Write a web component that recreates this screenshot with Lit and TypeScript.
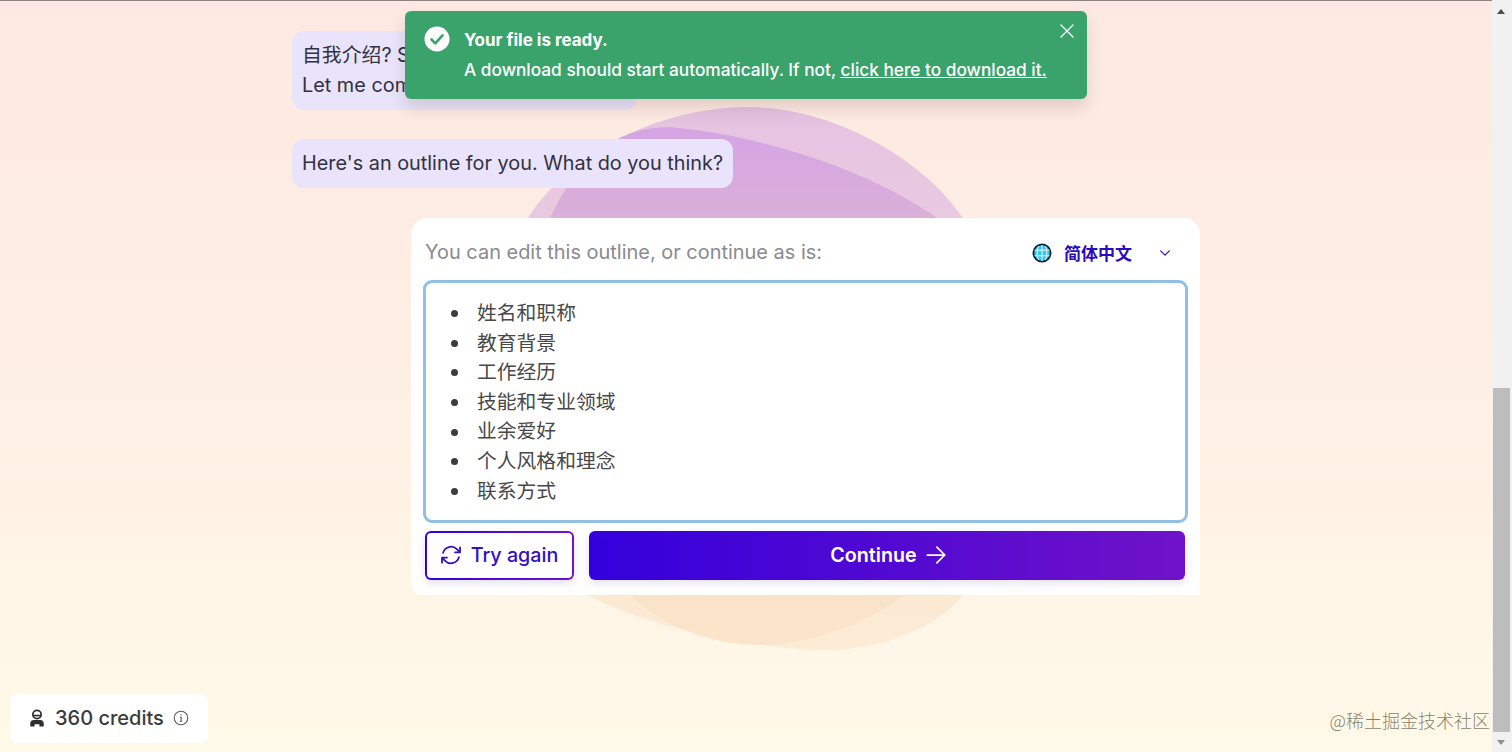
import { LitElement, css, html, svg } from 'lit'
import { customElement } from 'lit/decorators.js'

const outline = ['姓名和职称', '教育背景', '工作经历', '技能和专业领域', '业余爱好', '个人风格和理念', '联系方式']

const heroIcon = (d: string, width = 1.5) => html`
  <svg viewBox="0 0 24 24" fill="none" stroke="currentColor" stroke-width=${width} stroke-linecap="round" stroke-linejoin="round">
    <path d=${d}></path>
  </svg>
`

@customElement('app-root')
export class AppRoot extends LitElement {
  static styles = css`
    :host {
      display: flex;
      height: 100vh;
      overflow: hidden;
      font-family: Inter, 'Noto Sans CJK SC', sans-serif;
      color: #33313f;
    }
    .page {
      position: relative;
      flex: 1;
      min-width: 0;
      border-top: 1px solid #8f8280;
      background: linear-gradient(180deg, #fde9e2 0%, #feefe4 50%, #fff9e8 100%);
    }
    .blobs {
      position: absolute;
      inset: -1px 0 0 0;
      width: 100%;
      height: 752px;
    }
    .column {
      position: relative;
      display: flex;
      flex-direction: column;
      align-items: flex-start;
      padding: 30px 0 0 292px;
    }
    .bubble {
      box-sizing: border-box;
      height: 49px;
      padding: 10px;
      border-radius: 12px;
      background: #e9e4fb;
      font-size: 19.85px;
      line-height: 29.5px;
    }
    .bubble.intro {
      width: 345px;
      height: 79px;
      margin-bottom: 29px;
    }
    .panel {
      box-sizing: border-box;
      width: 789px;
      margin: 30px 0 0 119px;
      padding: 0 12px 15px;
      border-radius: 16px 16px 0 12px;
      background: #fff;
    }
    .panel-head {
      display: flex;
      align-items: center;
      justify-content: space-between;
      box-sizing: border-box;
      height: 62px;
      padding: 6px 0 0 2px;
      color: #8a8a8f;
      font-size: 19.95px;
    }
    .lang {
      display: flex;
      align-items: center;
      padding-top: 1px;
      color: #2a0cbc;
      font-size: 17px;
      font-weight: 700;
    }
    .lang svg.globe {
      width: 20px;
      height: 20px;
      margin-right: 12px;
    }
    .lang .chev {
      display: flex;
      width: 14px;
      height: 14px;
      margin: 0 16px 0 26px;
    }
    .editor {
      box-sizing: border-box;
      height: 243px;
      margin: 0;
      padding: 16px 0 0 25px;
      border: 3px solid #90bfe8;
      border-radius: 9px;
      list-style: none;
      color: #484848;
      font-size: 19.8px;
      line-height: 29.6px;
    }
    .editor li {
      display: flex;
      align-items: center;
      gap: 19px;
    }
    .editor li::before {
      content: '';
      flex: none;
      width: 7px;
      height: 7px;
      border-radius: 50%;
      background: #3c3c40;
    }
    .actions {
      display: flex;
      gap: 15px;
      margin: 8px 3px 0 2px;
    }
    .btn {
      display: flex;
      align-items: center;
      justify-content: center;
      box-sizing: border-box;
      height: 49px;
      padding-bottom: 2px;
      border-radius: 6px;
      font-size: 19.7px;
      box-shadow: 0 3px 8px rgba(60, 40, 120, 0.14);
    }
    .btn svg {
      width: 24px;
      height: 24px;
    }
    .retry {
      gap: 8px;
      width: 149px;
      border: 2px solid transparent;
      background: linear-gradient(#fff, #fff) padding-box, linear-gradient(90deg, #3300d9, #7413cc) border-box;
      color: #3210c6;
      font-weight: 500;
    }
    .retry svg {
      margin-left: -2px;
    }
    .continue {
      flex: 1;
      gap: 5px;
      padding-left: 6px;
      background: linear-gradient(90deg, #3300dc, #7012c8);
      color: #fff;
      font-weight: 600;
    }
    .continue svg {
      width: 28px;
      height: 28px;
    }
    .toast {
      position: absolute;
      top: 10px;
      left: 405px;
      display: flex;
      box-sizing: border-box;
      width: 682px;
      height: 88px;
      padding: 15px 0 0 19px;
      border-radius: 6px;
      background: #3aa36c;
      color: #fff;
      font-size: 17.28px;
      box-shadow: 0 10px 16px rgba(90, 60, 60, 0.16);
    }
    .toast .check {
      flex: none;
      width: 26px;
      height: 26px;
      margin-right: 14px;
    }
    .toast .title {
      font-size: 17px;
      font-weight: 700;
      line-height: 29px;
    }
    .toast .desc {
      font-weight: 500;
      line-height: 30px;
    }
    .toast a {
      color: inherit;
      text-decoration: underline;
    }
    .toast .close {
      position: absolute;
      top: 11px;
      right: 11px;
      display: flex;
      width: 18px;
      height: 18px;
    }
    .credits {
      position: absolute;
      left: 10px;
      bottom: 9px;
      display: flex;
      align-items: center;
      box-sizing: border-box;
      width: 198px;
      height: 49px;
      padding: 0 0 2px 18px;
      border-radius: 8px;
      background: #fff;
      font-size: 20px;
      font-weight: 500;
      color: #3a3a3d;
    }
    .credits .badge {
      width: 18px;
      height: 18px;
      margin-right: 9px;
    }
    .credits .info {
      display: flex;
      width: 16px;
      height: 16px;
      margin-left: 9px;
      color: #5c5c60;
    }
    .watermark {
      position: absolute;
      right: 2px;
      bottom: 20px;
      color: rgba(110, 105, 90, 0.85);
      font-size: 18px;
      font-weight: 300;
      line-height: 24px;
      font-family: 'Noto Sans CJK SC', sans-serif;
    }
    .scrollbar {
      flex: none;
      display: flex;
      flex-direction: column;
      align-items: center;
      box-sizing: border-box;
      width: 20px;
      padding-right: 2px;
      background: #f1f1f1;
    }
    .thumb {
      width: 17px;
      height: 344px;
      margin-top: auto;
      background: #bdbdbd;
    }
    .arrow {
      width: 0;
      height: 0;
      margin: 8px 0 7px;
      border-left: 4.5px solid transparent;
      border-right: 4.5px solid transparent;
      border-top: 5px solid #8e8e8e;
    }
    .arrow.up {
      margin: 9px 0 0;
      border-top: 0;
      border-bottom: 5px solid #4a4a4a;
    }
  `

  private blobs() {
    return svg`
      <defs>
        <linearGradient id="outer" x1="0" y1="0" x2="0" y2="1">
          <stop offset="0" stop-color="#e6c2e2"></stop>
          <stop offset="0.2" stop-color="#e9c9e0"></stop>
          <stop offset="0.9" stop-color="#fbe9d2"></stop>
          <stop offset="1" stop-color="#fcecd6"></stop>
        </linearGradient>
        <linearGradient id="inner" x1="0" y1="0" x2="0" y2="1">
          <stop offset="0" stop-color="#d4a4e4"></stop>
          <stop offset="0.18" stop-color="#dbb0d8"></stop>
          <stop offset="0.9" stop-color="#f9e3c8"></stop>
          <stop offset="1" stop-color="#fbe5ca"></stop>
        </linearGradient>
      </defs>
      <path fill="url(#outer)" d="M528 218C565 160 650 107 750 107C830 108 920 155 963 218L963 595C940 625 885 650 827 650C770 651 650 630 588 595Z"></path>
      <path fill="url(#inner)" d="M550 218C575 165 610 127 670 127C760 135 870 170 937 218L903 595C880 615 820 645 760 645C710 645 660 625 630 595Z"></path>
    `
  }

  render() {
    return html`
      <div class="page">
        <svg class="blobs" viewBox="0 0 1492 752">${this.blobs()}</svg>
        <div class="column">
          <div class="bubble intro">自我介绍? Sure thing!<br />Let me come up with an outline.</div>
          <div class="bubble">Here's an outline for you. What do you think?</div>
          <div class="panel">
            <div class="panel-head">
              <span>You can edit this outline, or continue as is:</span>
              <div class="lang">
                <svg class="globe" viewBox="0 0 20 20">
                  <circle cx="10" cy="10" r="8.6" fill="#35c4ea" stroke="#0a2230" stroke-width="1.8"></circle>
                  <path d="M2.5 7.2h15M2.5 12.8h15M10 2v16M6.5 3.2c-1.8 4-1.8 9.6 0 13.6M13.5 3.2c1.8 4 1.8 9.6 0 13.6" fill="none" stroke="#e6fbff" stroke-width="1"></path>
                </svg>
                简体中文
                <span class="chev">${heroIcon('M19.5 8.25l-7.5 7.5-7.5-7.5', 2)}</span>
              </div>
            </div>
            <ul class="editor">
              ${outline.map((item) => html`<li>${item}</li>`)}
            </ul>
            <div class="actions">
              <div class="btn retry">
                ${heroIcon('M16.023 9.348h4.992v-.001M2.985 19.644v-4.992m0 0h4.992m-4.993 0l3.181 3.183a8.25 8.25 0 0013.803-3.7M4.031 9.865a8.25 8.25 0 0113.803-3.7l3.181 3.182m0-4.991v4.99', 1.8)}
                Try again
              </div>
              <div class="btn continue">Continue ${heroIcon('M4.5 12h15m0 0l-6.75-6.75M19.5 12l-6.75 6.75')}</div>
            </div>
          </div>
        </div>
        <div class="toast">
          <svg class="check" viewBox="0 0 26 26">
            <circle cx="13" cy="13" r="12.5" fill="#fff"></circle>
            <path d="M7.5 13.5l3.8 3.8 7.2-8" fill="none" stroke="#3aa36c" stroke-width="2.6" stroke-linecap="round" stroke-linejoin="round"></path>
          </svg>
          <div>
            <div class="title">Your file is ready.</div>
            <div class="desc">A download should start automatically. If not, <a href="#">click here to download it.</a></div>
          </div>
          <span class="close">${heroIcon('M4 20L20 4M4 4l16 16', 1.8)}</span>
        </div>
        <div class="credits">
          <svg class="badge" viewBox="0 0 20 20">
            <circle cx="10" cy="6.2" r="4.6" fill="none" stroke="#2e2e30" stroke-width="1.9"></circle>
            <path d="M5.4 6.4h9.2v1.8H5.4z" fill="#2e2e30"></path>
            <path d="M2.5 19.5v-3.5c0-2.5 2-3.8 4-3.8h7c2 0 4 1.3 4 3.8v3.5h-4.8v-2.5h-5.400v2.5z" fill="#2e2e30"></path>
          </svg>
          360 credits
          <span class="info">
            <svg viewBox="0 0 16 16" fill="none" stroke="currentColor">
              <circle cx="8" cy="8" r="6.8" stroke-width="1.1"></circle>
              <path d="M6.8 7.3H8.1V11.3M6.7 11.3H9.4" stroke-width="1.1"></path>
              <circle cx="8" cy="4.9" r="0.7" fill="currentColor" stroke="none"></circle>
            </svg>
          </span>
        </div>
        <div class="watermark">@稀土掘金技术社区</div>
      </div>
      <div class="scrollbar">
        <div class="arrow up"></div>
        <div class="thumb"></div>
        <div class="arrow"></div>
      </div>
    `
  }
}
